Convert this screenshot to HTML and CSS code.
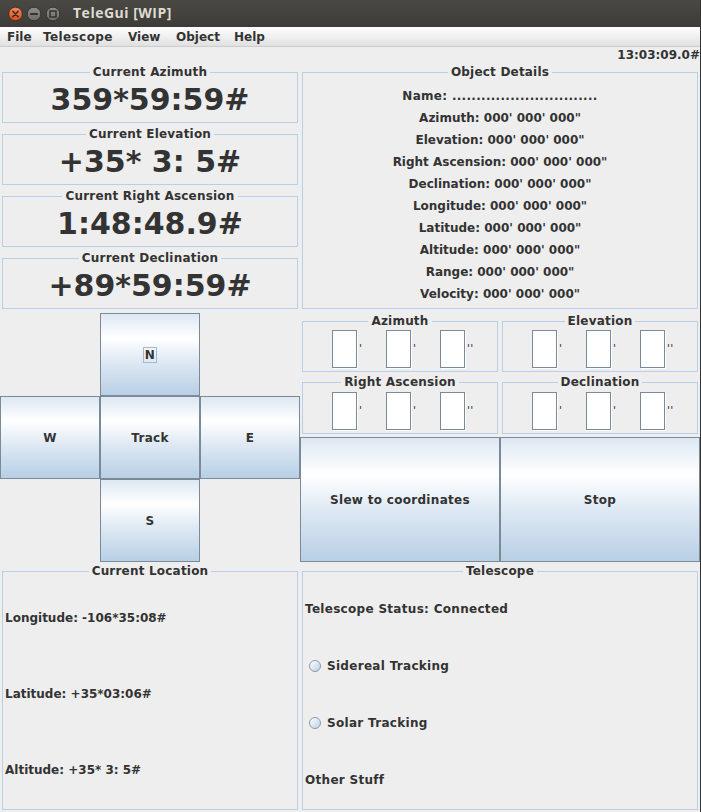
FILE: index.html
```html
<!DOCTYPE html>
<html>
<head>
<meta charset="utf-8">
<title>TeleGui [WIP]</title>
<link rel="stylesheet" href="styles.css">
</head>
<body>
<div class="window">
  <div class="titlebar">
    <svg class="winbtns" width="64" height="27" viewBox="0 0 64 27">
      <defs>
        <linearGradient id="gc" x1="0" y1="0" x2="0" y2="1">
          <stop offset="0" stop-color="#f58a5c"/>
          <stop offset="1" stop-color="#dc4b17"/>
        </linearGradient>
        <linearGradient id="gg" x1="0" y1="0" x2="0" y2="1">
          <stop offset="0" stop-color="#8f8e89"/>
          <stop offset="1" stop-color="#6c6b66"/>
        </linearGradient>
      </defs>
      <circle cx="15.5" cy="14" r="6.8" fill="url(#gc)" stroke="#3a2a22" stroke-width="0.8"/>
      <path d="M12.8 11.3 L18.2 16.7 M18.2 11.3 L12.8 16.7" stroke="#3b2e2a" stroke-width="1.6" stroke-linecap="round"/>
      <circle cx="34" cy="14" r="6.8" fill="url(#gg)" stroke="#2e2d2a" stroke-width="0.8"/>
      <path d="M30.8 14 L37.2 14" stroke="#34332f" stroke-width="1.8" stroke-linecap="round"/>
      <circle cx="53" cy="14" r="6.8" fill="url(#gg)" stroke="#2e2d2a" stroke-width="0.8"/>
      <rect x="50" y="11" width="6" height="6" fill="none" stroke="#34332f" stroke-width="1.5"/>
    </svg>
    <span class="title">TeleGui [WIP]</span>
  </div>
  <div class="menubar">
    <span class="menu m-file">File</span><span class="menu m-tel">Telescope</span><span class="menu m-view">View</span><span class="menu m-obj">Object</span><span class="menu">Help</span>
  </div>
  <div class="clock num">13:03:09.0#</div>
  <div class="main">
    <div class="readouts">
      <div class="cell"><fieldset class="box"><legend>Current Azimuth</legend><div class="big">359*59:59#</div></fieldset></div>
      <div class="cell"><fieldset class="box"><legend>Current Elevation</legend><div class="big">+35* 3: 5#</div></fieldset></div>
      <div class="cell"><fieldset class="box"><legend>Current Right Ascension</legend><div class="big">1:48:48.9#</div></fieldset></div>
      <div class="cell"><fieldset class="box"><legend>Current Declination</legend><div class="big">+89*59:59#</div></fieldset></div>
    </div>
    <div class="cell"><fieldset class="box"><legend>Object Details</legend>
      <div class="details">
        <div class="name">Name: ..............................</div>
        <div>Azimuth: 000' 000' 000"</div>
        <div>Elevation: 000' 000' 000"</div>
        <div>Right Ascension: 000' 000' 000"</div>
        <div>Declination: 000' 000' 000"</div>
        <div>Longitude: 000' 000' 000"</div>
        <div>Latitude: 000' 000' 000"</div>
        <div>Altitude: 000' 000' 000"</div>
        <div>Range: 000' 000' 000"</div>
        <div>Velocity: 000' 000' 000"</div>
      </div>
    </fieldset></div>
    <div class="pad">
      <div></div><button class="btn"><span class="focus">N</span></button><div></div>
      <button class="btn">W</button><button class="btn">Track</button><button class="btn">E</button>
      <div></div><button class="btn">S</button><div></div>
    </div>
    <div class="control">
      <div class="coords">
        <div class="cell"><fieldset class="box"><legend>Azimuth</legend>
          <div class="fields"><span class="field"></span><span class="tick">'</span><span class="field"></span><span class="tick">'</span><span class="field"></span><span class="tick">''</span></div>
        </fieldset></div>
        <div class="cell"><fieldset class="box"><legend>Elevation</legend>
          <div class="fields"><span class="field"></span><span class="tick">'</span><span class="field"></span><span class="tick">'</span><span class="field"></span><span class="tick">''</span></div>
        </fieldset></div>
        <div class="cell"><fieldset class="box"><legend>Right Ascension</legend>
          <div class="fields"><span class="field"></span><span class="tick">'</span><span class="field"></span><span class="tick">'</span><span class="field"></span><span class="tick">''</span></div>
        </fieldset></div>
        <div class="cell"><fieldset class="box"><legend>Declination</legend>
          <div class="fields"><span class="field"></span><span class="tick">'</span><span class="field"></span><span class="tick">'</span><span class="field"></span><span class="tick">''</span></div>
        </fieldset></div>
      </div>
      <div class="actions">
        <button class="btn">Slew to coordinates</button>
        <button class="btn">Stop</button>
      </div>
    </div>
    <div class="cell"><fieldset class="box"><legend>Current Location</legend>
      <div class="rows num">
        <div class="row">Longitude: -106*35:08#</div>
        <div class="row">Latitude: +35*03:06#</div>
        <div class="row">Altitude: +35* 3: 5#</div>
      </div>
    </fieldset></div>
    <div class="cell"><fieldset class="box"><legend>Telescope</legend>
      <div class="rows">
        <div class="row">Telescope Status: Connected</div>
        <div class="row"><span class="radio"></span>Sidereal Tracking</div>
        <div class="row"><span class="radio"></span>Solar Tracking</div>
        <div class="row">Other Stuff</div>
      </div>
    </fieldset></div>
  </div>
</div>
</body>
</html>
```
FILE: styles.css
```css
* { box-sizing: border-box; }
html, body { margin: 0; padding: 0; }
body {
  background: #eeeeee;
  color: #333333;
  font-family: "DejaVu Sans", sans-serif;
  font-weight: bold;
  font-size: 12px;
  line-height: 14px;
  letter-spacing: 0.3px;
}
.num { letter-spacing: 0; }
.window {
  width: 701px;
  height: 812px;
  border-right: 1px solid #34332f;
  overflow: hidden;
}
.titlebar {
  height: 27px;
  display: flex;
  align-items: center;
  background: linear-gradient(#4a4944, #3c3b37);
}
.winbtns { display: block; flex: none; }
.title {
  margin-left: 9px;
  font-family: "Open Sans", "DejaVu Sans", sans-serif;
  font-weight: bold;
  font-size: 14px;
  letter-spacing: 0.5px;
  color: #dfdbd2;
  padding-bottom: 1px;
}
.menubar {
  height: 20px;
  display: flex;
  align-items: center;
  padding-left: 7px;
  background: linear-gradient(#ffffff, #e0e0e0);
  border-bottom: 1px solid #cdcdcd;
}
.menu { flex: none; white-space: nowrap; letter-spacing: 0; }
.m-file { width: 36px; }
.m-tel { width: 85px; letter-spacing: 0.4px; }
.m-view { width: 48px; }
.m-obj { width: 58px; }
.clock {
  height: 16px;
  line-height: 16px;
  text-align: right;
}
.main {
  display: grid;
  grid-template-columns: 300px 400px;
  grid-template-rows: 248px 251px 250px;
}
.cell { padding: 2px; height: 100%; }
.box {
  margin: 0;
  padding: 0;
  min-width: 0;
  height: 100%;
  border: 1px solid #b8cfe5;
  display: flex;
  flex-direction: column;
}
.box legend {
  margin: 0 auto;
  padding: 0 3px;
  line-height: 14px;
  letter-spacing: 0.2px;
}
.readouts {
  display: grid;
  grid-template-rows: repeat(4, 1fr);
}
.big {
  flex: 1;
  display: flex;
  align-items: center;
  justify-content: center;
  font-size: 30px;
  line-height: 34px;
  padding-bottom: 1px;
  letter-spacing: 0;
}
.details {
  flex: 1;
  display: flex;
  flex-direction: column;
  align-items: center;
  justify-content: center;
  line-height: 22px;
  padding-top: 3px;
  letter-spacing: 0;
}
.details .name { letter-spacing: 0.3px; }
.pad {
  padding-top: 2px;
  display: grid;
  grid-template-columns: repeat(3, 100px);
  grid-template-rows: repeat(3, 83px);
}
.btn {
  margin: 0;
  padding: 0;
  border: 1px solid #7a8a99;
  border-radius: 0;
  background: linear-gradient(#dde8f3 0%, #ffffff 30%, #dde8f3 60%, #b8cfe5 100%);
  font: bold 12px/14px "DejaVu Sans", sans-serif;
  letter-spacing: 0.3px;
  color: #333333;
}
.focus {
  display: inline-block;
  outline: 1px solid #a3b8cc;
  padding: 0 1px;
  line-height: 14px;
}
.control {
  display: flex;
  flex-direction: column;
}
.coords {
  height: 126px;
  display: grid;
  grid-template-columns: 200px 200px;
  grid-template-rows: 62px 64px;
}
.coords .cell { padding: 3px 2px 1px; }
.coords .cell:nth-child(n+3) { padding: 2px 2px 3px; }
.fields {
  flex: 1;
  display: flex;
  align-items: center;
  padding-left: 29px;
  padding-bottom: 1px;
}
.field {
  width: 25px;
  height: 38px;
  background: #ffffff;
  border: 1px solid #7a8a99;
  box-shadow: 1px 1px 0 #ffffff;
  flex: none;
}
.tick {
  width: 29px;
  padding-left: 2px;
  font-weight: normal;
  font-size: 11px;
  flex: none;
}
.actions {
  flex: 1;
  display: flex;
}
.actions .btn { flex: 1; }
.rows {
  flex: 1;
  display: flex;
  flex-direction: column;
  padding: 2px 0 1px 2px;
}
.row {
  flex: 1;
  display: flex;
  align-items: center;
}
.radio {
  width: 12px;
  height: 12px;
  border-radius: 50%;
  border: 1px solid #8a9aab;
  background: linear-gradient(135deg, #ffffff, #bcd0e4);
  margin-left: 4px;
  margin-right: 6px;
  flex: none;
}
```
